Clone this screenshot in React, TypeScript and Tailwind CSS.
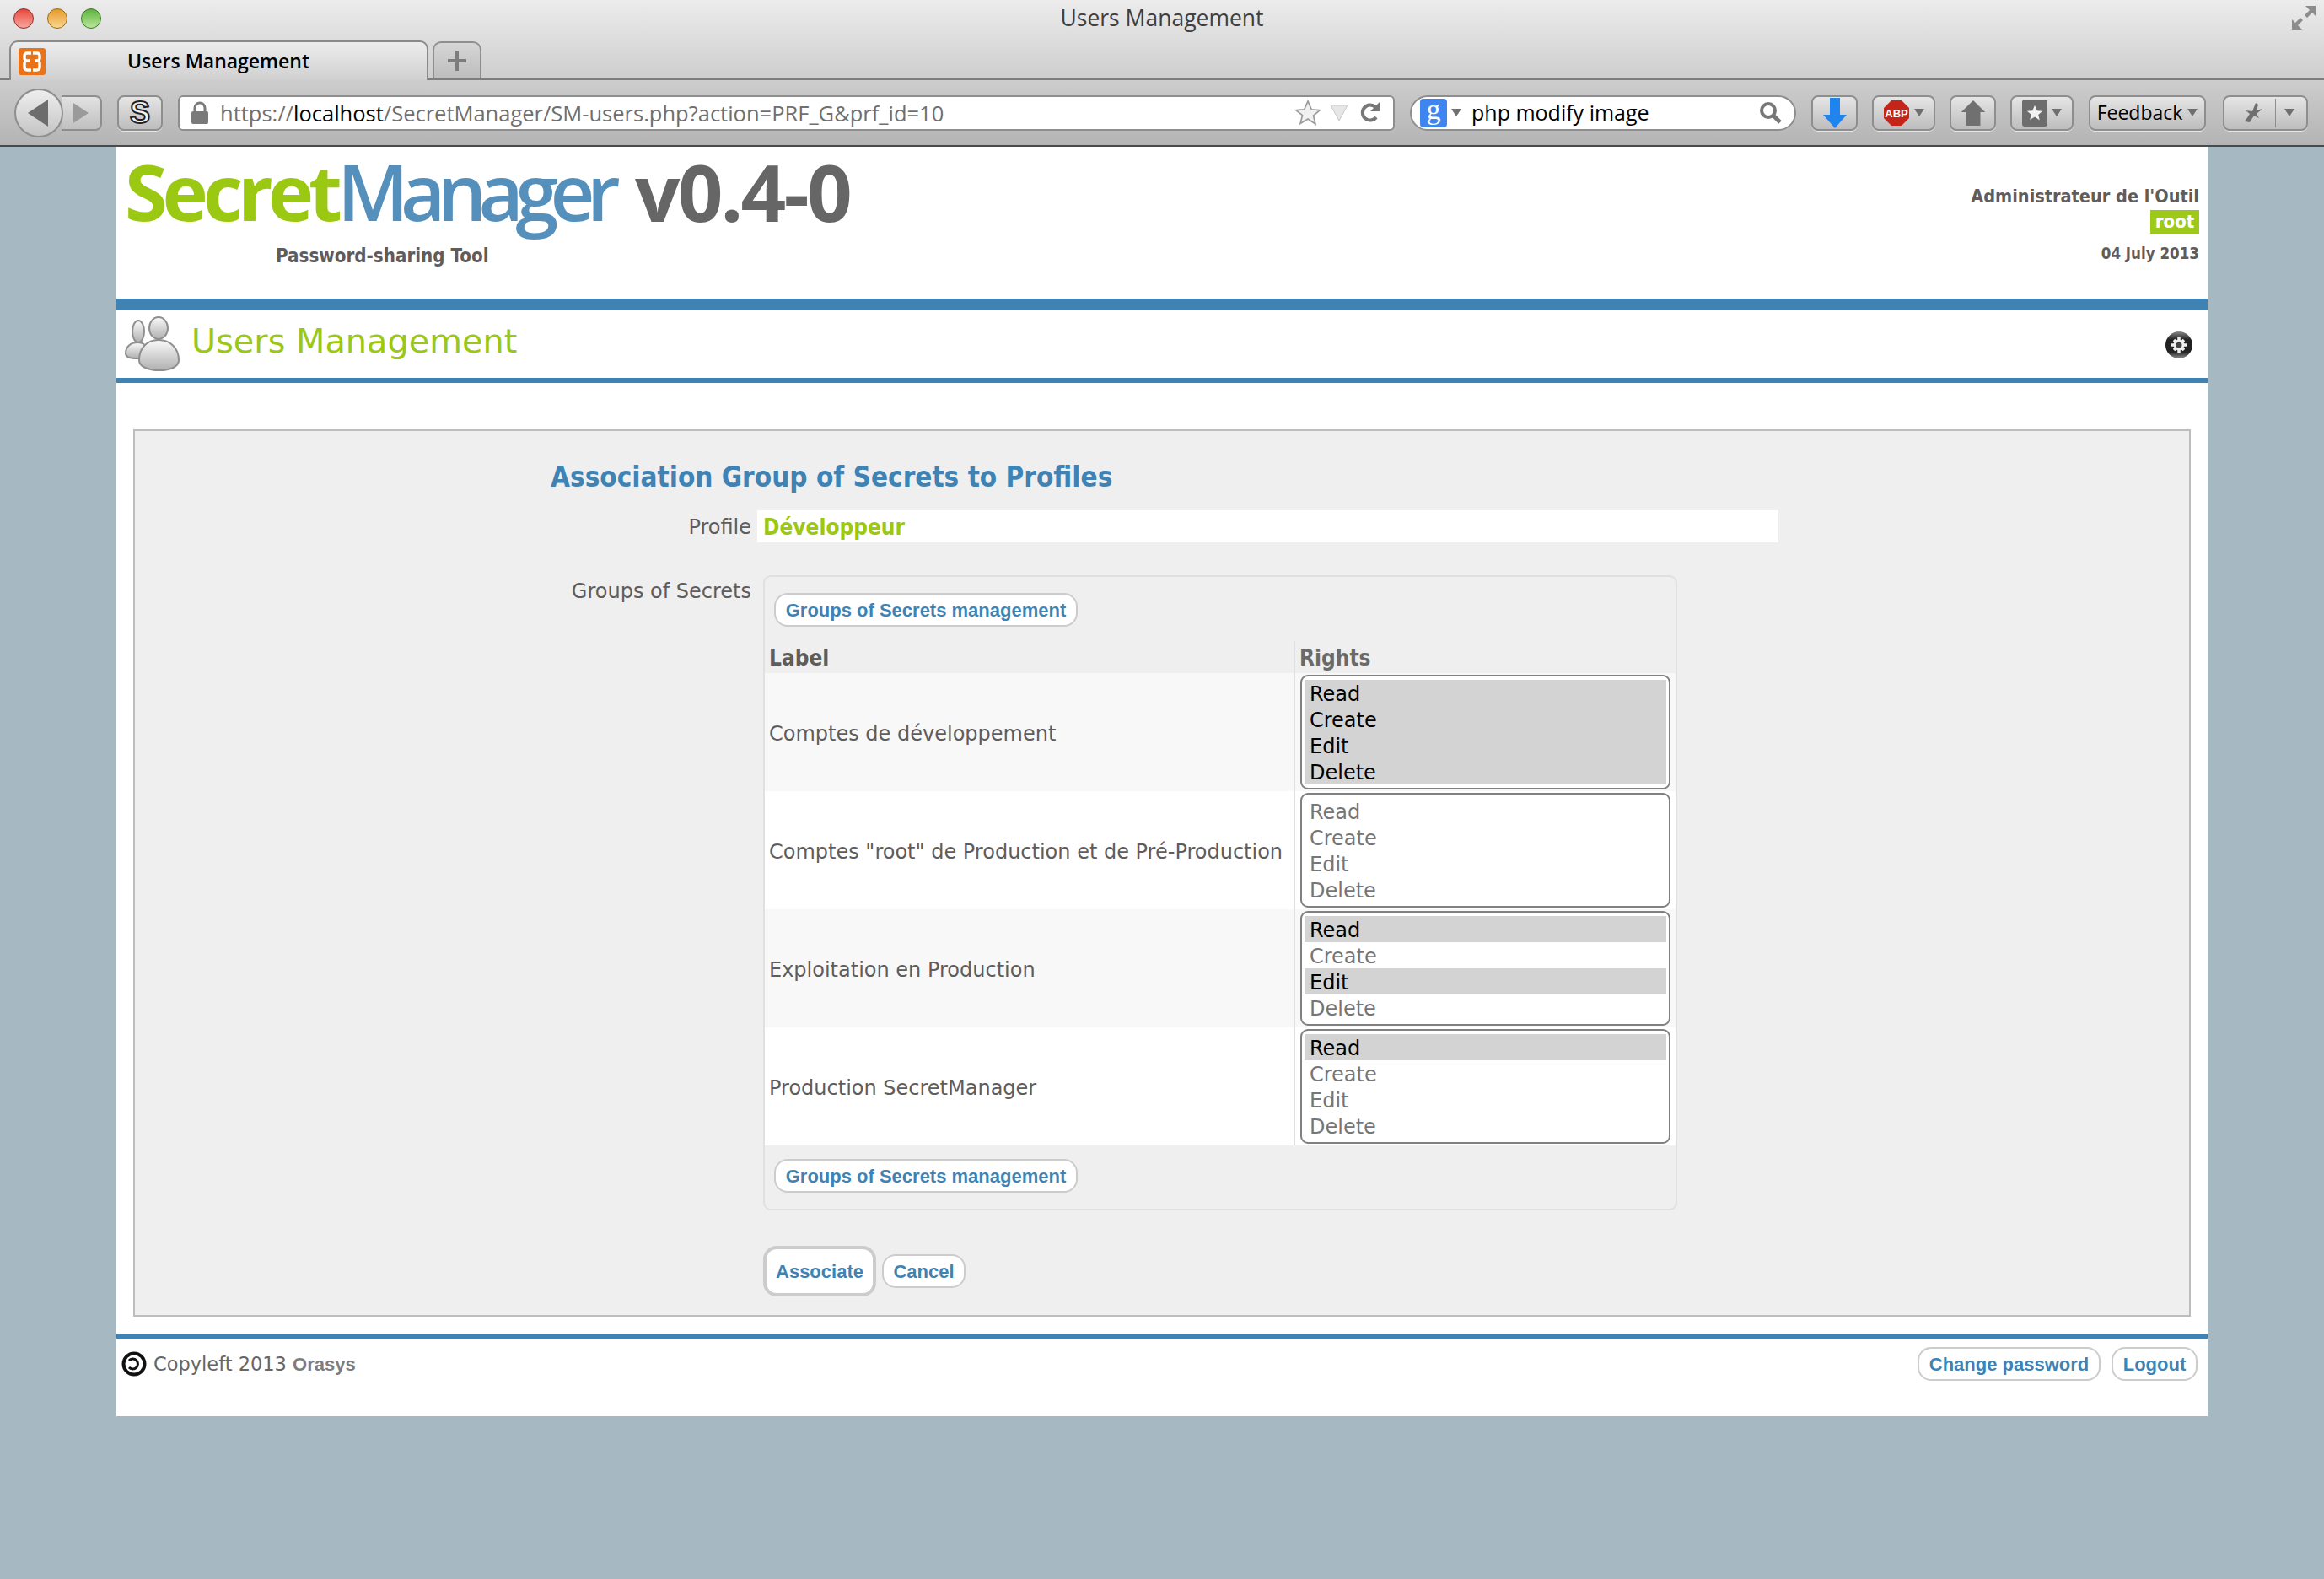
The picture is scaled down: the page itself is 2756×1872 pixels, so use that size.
import React from "react";

function ToolBtn({ className, children }: { className: string; children: React.ReactNode }) {
  return (
    <div className={"h-[42px] shrink-0 flex items-center justify-center rounded-[8px] border-2 border-[#8e8e8e] bg-gradient-to-b from-[#e6e6e6] to-[#bdbdbd] shadow-[0_1px_0_#e8e8e8] " + className}>
      {children}
    </div>
  );
}

const Caret = () => (
  <svg width="12" height="9" viewBox="0 0 12 9" className="shrink-0"><path d="M0 0h12L6 9z" fill="#6f6f6f" /></svg>
);

function Pill({ className, children }: { className: string; children: React.ReactNode }) {
  return (
    <div className={"flex items-center justify-center bg-white border-2 border-[#cccccc] rounded-[16px] text-[#3f83b5] font-bold text-[22px] font-['Liberation_Sans',Arial,sans-serif] " + className}>
      {children}
    </div>
  );
}

function Select({ on }: { on: boolean[] }) {
  const names = ["Read", "Create", "Edit", "Delete"];
  return (
    <div className="ml-[6px] w-[439px] h-[136px] mt-[2px] rounded-[9px] border-2 border-[#808080] bg-white pt-[4px] px-[3px]">
      {names.map((n, i) => (
        <div key={n} className={"h-[31px] leading-[34px] pl-[6px] text-[24px] " + (on[i] ? "bg-[#d3d3d3] text-black" : "text-[#767676]")}>
          {n}
        </div>
      ))}
    </div>
  );
}

function Row({ label, on, shade }: { label: string; on: boolean[]; shade: boolean }) {
  return (
    <div className={"grid grid-cols-[627px_1fr] h-[140px] " + (shade ? "bg-[#f8f8f8]" : "bg-white")}>
      <div className="flex items-center pl-[5px] pt-[3px] text-[24px] text-[#5f5c5c] whitespace-nowrap">{label}</div>
      <div className="border-l-2 border-[#e0e0e0]">
        <Select on={on} />
      </div>
    </div>
  );
}

function UsersIcon() {
  return (
    <svg width="68" height="66" viewBox="0 0 68 66" className="shrink-0">
      <defs>
        <linearGradient id="ug" x1="0" y1="0" x2="0" y2="1">
          <stop offset="0" stopColor="#fafafa" />
          <stop offset="1" stopColor="#b0b0b0" />
        </linearGradient>
      </defs>
      <g fill="url(#ug)" stroke="#8f8f8f" strokeWidth="2">
        <ellipse cx="17" cy="18" rx="7" ry="13" />
        <path d="M2 44c0-8 6-13 14-13s12 5 12 12c0 5-6 7-13 7S2 49 2 44z" />
        <ellipse cx="41" cy="14" rx="11" ry="13" />
        <path d="M18 52c0-14 9-24 23-24s24 10 24 24c0 8-10 12-23 12S18 60 18 52z" />
      </g>
    </svg>
  );
}

const Bold = "font-['DejaVu_Sans_Condensed','Open_Sans',sans-serif] font-bold";

export default function App() {
  return (
    <div className="w-[2756px] h-[1872px] overflow-hidden bg-[#a6b8c2] font-['DejaVu_Sans',Verdana,sans-serif]">
      {/* browser chrome */}
      <div className="h-[174px] border-b-2 border-[#4a4a4a] bg-gradient-to-b from-[#ececec] via-[#d0d0d0] to-[#b4b4b4] font-['Open_Sans',sans-serif]">
        <div className="h-[48px] grid grid-cols-[1fr_auto_1fr] items-center">
          <div className="flex items-center gap-[16px] pl-[16px] -mt-[4px]">
            <span className="w-[24px] h-[24px] rounded-full border border-[#8a2a25] bg-gradient-to-b from-[#e8433b] to-[#f5a59c]" />
            <span className="w-[24px] h-[24px] rounded-full border border-[#9a6a14] bg-gradient-to-b from-[#e59a1c] to-[#f9d68c]" />
            <span className="w-[24px] h-[24px] rounded-full border border-[#3c7a22] bg-gradient-to-b from-[#5cb23a] to-[#b9e79c]" />
          </div>
          <div className="text-[26.5px] text-[#3f3f3f] -mt-[5px]">Users Management</div>
          <div className="flex justify-end pr-[9px] -mt-[6px]">
            <svg width="30" height="30" viewBox="0 0 30 30">
              <path d="M17 1h12v12l-4-4-6 6-3-3 6-6zM13 29H1V17l4 4 6-6 3 3-6 6z" fill="#8c8c8c" />
            </svg>
          </div>
        </div>
        <div className="h-[47px] flex items-end pl-[11px] gap-[5px] border-b-2 border-[#7d7d7d]">
          <div className="relative w-[497px] h-[47px] -mb-[2px] rounded-t-[10px] border-2 border-b-0 border-[#8a8a8a] bg-gradient-to-b from-[#ededed] to-[#d0d0d0] flex items-center">
            <div className="ml-[9px] w-[32px] h-[32px] rounded-[3px] bg-[#ea7317] flex items-center justify-center">
              <svg width="24" height="26" viewBox="0 0 24 26" fill="none" stroke="#fff" strokeWidth="3.5">
                <path d="M11 3H6a3 3 0 0 0-3 3v3a3 3 0 0 0 3 3h3M9 12H6a3 3 0 0 0-3 3v5a3 3 0 0 0 3 3h5" />
                <path d="M13 3h5a3 3 0 0 1 3 3v3a3 3 0 0 1-3 3h-3M15 12h3a3 3 0 0 1 3 3v5a3 3 0 0 1-3 3h-5" />
              </svg>
            </div>
            <div className="ml-[97px] text-[23px] font-semibold text-black whitespace-nowrap">Users Management</div>
          </div>
          <div className="w-[58px] h-[44px] rounded-t-[10px] border-2 border-b-0 border-[#8f8f8f] bg-gradient-to-b from-[#d6d6d6] to-[#bdbdbd] flex items-center justify-center">
            <svg width="22" height="24" viewBox="0 0 22 24"><path d="M9 0h4v10h9v4h-9v10H9V14H0v-4h9z" fill="#7c7c7c" /></svg>
          </div>
        </div>
        <div className="h-[77px] flex items-center pl-[17px]">
          <div className="relative z-10 w-[58px] h-[58px] shrink-0 rounded-full border-2 border-[#8e8e8e] bg-gradient-to-b from-[#eeeeee] to-[#c4c4c4] flex items-center justify-center">
            <svg width="26" height="32" viewBox="0 0 26 32"><path d="M24 0v32L0 16z" fill="#6d6d6d" /></svg>
          </div>
          <div className="-ml-[2px] w-[48px] h-[42px] shrink-0 rounded-r-[8px] border-2 border-l-0 border-[#8e8e8e] bg-gradient-to-b from-[#e2e2e2] to-[#c0c0c0] flex items-center justify-center">
            <svg width="18" height="24" viewBox="0 0 18 24"><path d="M0 0v24l18-12z" fill="#9a9a9a" /></svg>
          </div>
          <ToolBtn className="ml-[18px] w-[54px]">
            <span className="text-[36px] leading-none font-bold text-[#f2f2f2] [-webkit-text-stroke:2px_#222] font-['Liberation_Sans',sans-serif]">S</span>
          </ToolBtn>
          <div className="ml-[18px] w-[1443px] h-[42px] shrink-0 rounded-[6px] border-2 border-[#8e8e8e] bg-white flex items-center text-[25.5px] text-[#6f6f6f] whitespace-nowrap">
            <svg width="22" height="28" viewBox="0 0 22 28" className="ml-[13px] shrink-0">
              <path d="M5 12V8a6 6 0 0 1 12 0v4" fill="none" stroke="#7a7a7a" strokeWidth="3" />
              <rect x="1" y="12" width="20" height="15" rx="2" fill="#7a7a7a" />
            </svg>
            <div className="ml-[13px] pt-[1px]">https://<span className="text-black">localhost</span>/SecretManager/SM-users.php?action=PRF_G&amp;prf_id=10</div>
            <div className="ml-auto flex items-center gap-[8px] pr-[14px]">
              <svg width="34" height="34" viewBox="0 0 24 24"><path d="M12 2l3 7 7 .6-5.4 4.6 1.7 7L12 17l-6.3 3.8 1.7-7L2 9.6 9 9z" fill="#f1f1f1" stroke="#9b9b9b" strokeWidth="1.2" /></svg>
              <svg width="20" height="18" viewBox="0 0 20 18" className="ml-[2px]"><path d="M0 0h20L10 18z" fill="#e6e6e6" stroke="#c8c8c8" /></svg>
              <svg width="26" height="28" viewBox="0 0 26 28" className="ml-[6px]">
                <path d="M20 19a9 9 0 1 1-1-12" fill="none" stroke="#777" strokeWidth="4" />
                <path d="M24 1v11H13z" fill="#777" />
              </svg>
            </div>
          </div>
          <div className="ml-[18px] w-[458px] h-[42px] shrink-0 rounded-full border-2 border-[#8e8e8e] bg-white flex items-center text-[25px] text-black whitespace-nowrap">
            <div className="ml-[10px] w-[32px] h-[34px] rounded-[4px] bg-[#3f85f0] flex items-center justify-center text-white text-[34px] leading-none pb-[8px] font-['Liberation_Serif',serif]">g</div>
            <div className="ml-[5px]"><Caret /></div>
            <div className="ml-[12px] pt-[1px]">php modify image</div>
            <svg width="28" height="28" viewBox="0 0 28 28" className="ml-auto mr-[14px]">
              <circle cx="11" cy="11" r="8" fill="none" stroke="#777" strokeWidth="4" />
              <path d="M17 17l8 8" stroke="#777" strokeWidth="5" />
            </svg>
          </div>
          <ToolBtn className="ml-[18px] w-[55px]">
            <svg width="28" height="36" viewBox="0 0 28 36"><path d="M8 0h12v20h8L14 36 0 20h8z" fill="#1f84ee" /></svg>
          </ToolBtn>
          <ToolBtn className="ml-[17px] w-[75px] gap-[5px]">
            <svg width="32" height="32" viewBox="0 0 32 32">
              <path d="M10 1h12l9 9v12l-9 9H10l-9-9V10z" fill="#c5241a" />
              <text x="16" y="21" textAnchor="middle" fontSize="13" fontWeight="700" fill="#fff" fontFamily="Liberation Sans, sans-serif">ABP</text>
            </svg>
            <Caret />
          </ToolBtn>
          <ToolBtn className="ml-[17px] w-[55px]">
            <svg width="32" height="32" viewBox="0 0 34 32"><path d="M17 0l15 15h-6v17H8V15H2z" fill="#707070" /></svg>
          </ToolBtn>
          <ToolBtn className="ml-[17px] w-[75px] gap-[5px]">
            <div className="w-[30px] h-[32px] rounded-[3px] bg-[#6d6d6d] flex items-center justify-center">
              <svg width="22" height="22" viewBox="0 0 24 24"><path d="M12 2l3 7 7 .6-5.4 4.6 1.7 7L12 17l-6.3 3.8 1.7-7L2 9.6 9 9z" fill="#f2f2f2" /></svg>
            </div>
            <Caret />
          </ToolBtn>
          <ToolBtn className="ml-[18px] w-[139px] gap-[6px]">
            <span className="text-[23px] text-black">Feedback</span>
            <Caret />
          </ToolBtn>
          <ToolBtn className="ml-[20px] w-[101px]">
            <svg width="32" height="32" viewBox="0 0 32 32" className="ml-[4px] blur-[0.6px]">
              <path d="M6 26l6-9-5-4 8 1 4-10 3 2-2 7 7-2-7 6 3 5-6-3-5 8z" fill="#6f6f6f" />
            </svg>
            <div className="mx-[10px] w-px h-[34px] bg-[#8e8e8e]" />
            <Caret />
          </ToolBtn>
        </div>
      </div>

      {/* page */}
      <div className="mx-auto w-[2480px] h-[1505px] bg-white">
        <div className="h-[180px] flex justify-between">
          <div className="pl-[10px]">
            <div className="h-[100px] flex items-center whitespace-nowrap mt-[3px]">
              <span className="font-['Open_Sans',sans-serif] font-bold text-[92px] leading-none tracking-[-0.066em] text-[#9bc813]">Secret</span>
              <span className="font-['Open_Sans',sans-serif] font-semibold text-[92px] leading-none tracking-[-0.105em] text-[#5590bd]">Manager</span>
              <span className="ml-[27px] font-['Open_Sans',sans-serif] font-bold text-[94px] leading-none tracking-[-0.03em] text-[#666666]">v0.4-0</span>
            </div>
            <div className={"mt-[12px] ml-[179px] text-[22.2px] leading-[28px] text-[#5f5c5c] whitespace-nowrap " + Bold}>Password-sharing Tool</div>
          </div>
          <div className={"pr-[10px] pt-[45px] flex flex-col items-end text-[#5f5c5c] " + Bold}>
            <div className="text-[21.5px] leading-[28px]">Administrateur de l'Outil</div>
            <div className="h-[28px] w-[58px] mt-[2px] bg-[#9dc91a] text-white text-[22px] leading-[28px] text-center">root</div>
            <div className="mt-[12px] text-[18.6px] leading-[24px]">04 July 2013</div>
          </div>
        </div>

        <div className="h-[100px] border-t-[14px] border-b-[6px] border-[#3f83b5] flex items-center justify-between pl-[9px] pr-[18px]">
          <div className="flex items-center">
            <UsersIcon />
            <div className="ml-[12px] -mt-[6px] text-[39.8px] text-[#9bc813] whitespace-nowrap">Users Management</div>
          </div>
          <svg width="32" height="32" viewBox="0 0 32 32" className="mt-[2px]">
            <defs>
              <linearGradient id="gg" x1="0" y1="0" x2="0" y2="1">
                <stop offset="0" stopColor="#8a8a8a" />
                <stop offset="0.3" stopColor="#222" />
                <stop offset="0.75" stopColor="#222" />
                <stop offset="1" stopColor="#8f8f8f" />
              </linearGradient>
            </defs>
            <circle cx="16" cy="16" r="16" fill="url(#gg)" />
            <g stroke="#f0f0f0" strokeWidth="3.5">
              <path d="M16 7v18M7 16h18M10 10l12 12M22 10L10 22" />
            </g>
            <circle cx="16" cy="16" r="6.5" fill="#f0f0f0" />
            <circle cx="16" cy="16" r="3.5" fill="#444" />
          </svg>
        </div>

        <div className="mx-[20px] mt-[55px] border-2 border-[#bdbdbd] bg-[#efefef] pt-[34px] pb-[22px] text-[#5f5c5c]">
          <div className={"ml-[493px] h-[40px] leading-[42px] text-[33px] text-[#3f83b5] whitespace-nowrap " + Bold}>Association Group of Secrets to Profiles</div>
          <div className="mt-[20px] flex h-[38px]">
            <div className="w-[731px] text-right text-[24px] leading-[41px]">Profile</div>
            <div className={"ml-[7px] w-[1211px] h-full bg-white pl-[7px] leading-[41px] text-[26px] text-[#9bc813] " + Bold}>Développeur</div>
          </div>
          <div className="mt-[39px] flex items-start">
            <div className="w-[731px] text-right text-[24px] leading-[39px]">Groups of Secrets</div>
            <div className="ml-[14px] w-[1084px] rounded-[9px] border-2 border-[#e0e0e0] pt-[19px] pb-[19px]">
              <Pill className="ml-[11px] w-[360px] h-[40px]">Groups of Secrets management</Pill>
              <div className={"mt-[17px] grid grid-cols-[627px_1fr] h-[38px] text-[26px] " + Bold}>
                <div className="pl-[5px] leading-[40px]">Label</div>
                <div className="border-l-2 border-[#e0e0e0] pl-[5px] leading-[40px] text-[#6a6a6a]">Rights</div>
              </div>
              <Row shade label="Comptes de développement" on={[true, true, true, true]} />
              <Row shade={false} label={'Comptes "root" de Production et de Pré-Production'} on={[false, false, false, false]} />
              <Row shade label="Exploitation en Production" on={[true, false, true, false]} />
              <Row shade={false} label="Production SecretManager" on={[true, false, false, false]} />
              <Pill className="ml-[11px] mt-[16px] w-[360px] h-[40px]">Groups of Secrets management</Pill>
            </div>
          </div>
          <div className="mt-[42px] pl-[745px] flex items-center">
            <Pill className="w-[134px] h-[60px] !border-4">Associate</Pill>
            <Pill className="ml-[7px] w-[99px] h-[40px]">Cancel</Pill>
          </div>
        </div>

        <div className="mt-[20px] h-[98px] border-t-[6px] border-[#3f83b5] flex items-start justify-between pl-[6px] pr-[12px] pt-[10px]">
          <div className="flex items-center h-[40px] whitespace-nowrap text-[22.5px]">
            <svg width="30" height="30" viewBox="0 0 30 30" className="shrink-0">
              <circle cx="15" cy="15" r="12.5" fill="none" stroke="#111" strokeWidth="4" />
              <path d="M9 11a6 6 0 1 1 0 8" fill="none" stroke="#111" strokeWidth="3" />
            </svg>
            <span className="ml-[8px] pt-[1px] text-[#666666]">Copyleft 2013 <span className="font-bold text-[#7d7d7d] text-[22px] font-['Liberation_Sans',Arial,sans-serif]">Orasys</span></span>
          </div>
          <div className="flex">
            <Pill className="w-[217px] h-[40px]">Change password</Pill>
            <Pill className="ml-[13px] w-[102px] h-[40px]">Logout</Pill>
          </div>
        </div>
      </div>
    </div>
  );
}
